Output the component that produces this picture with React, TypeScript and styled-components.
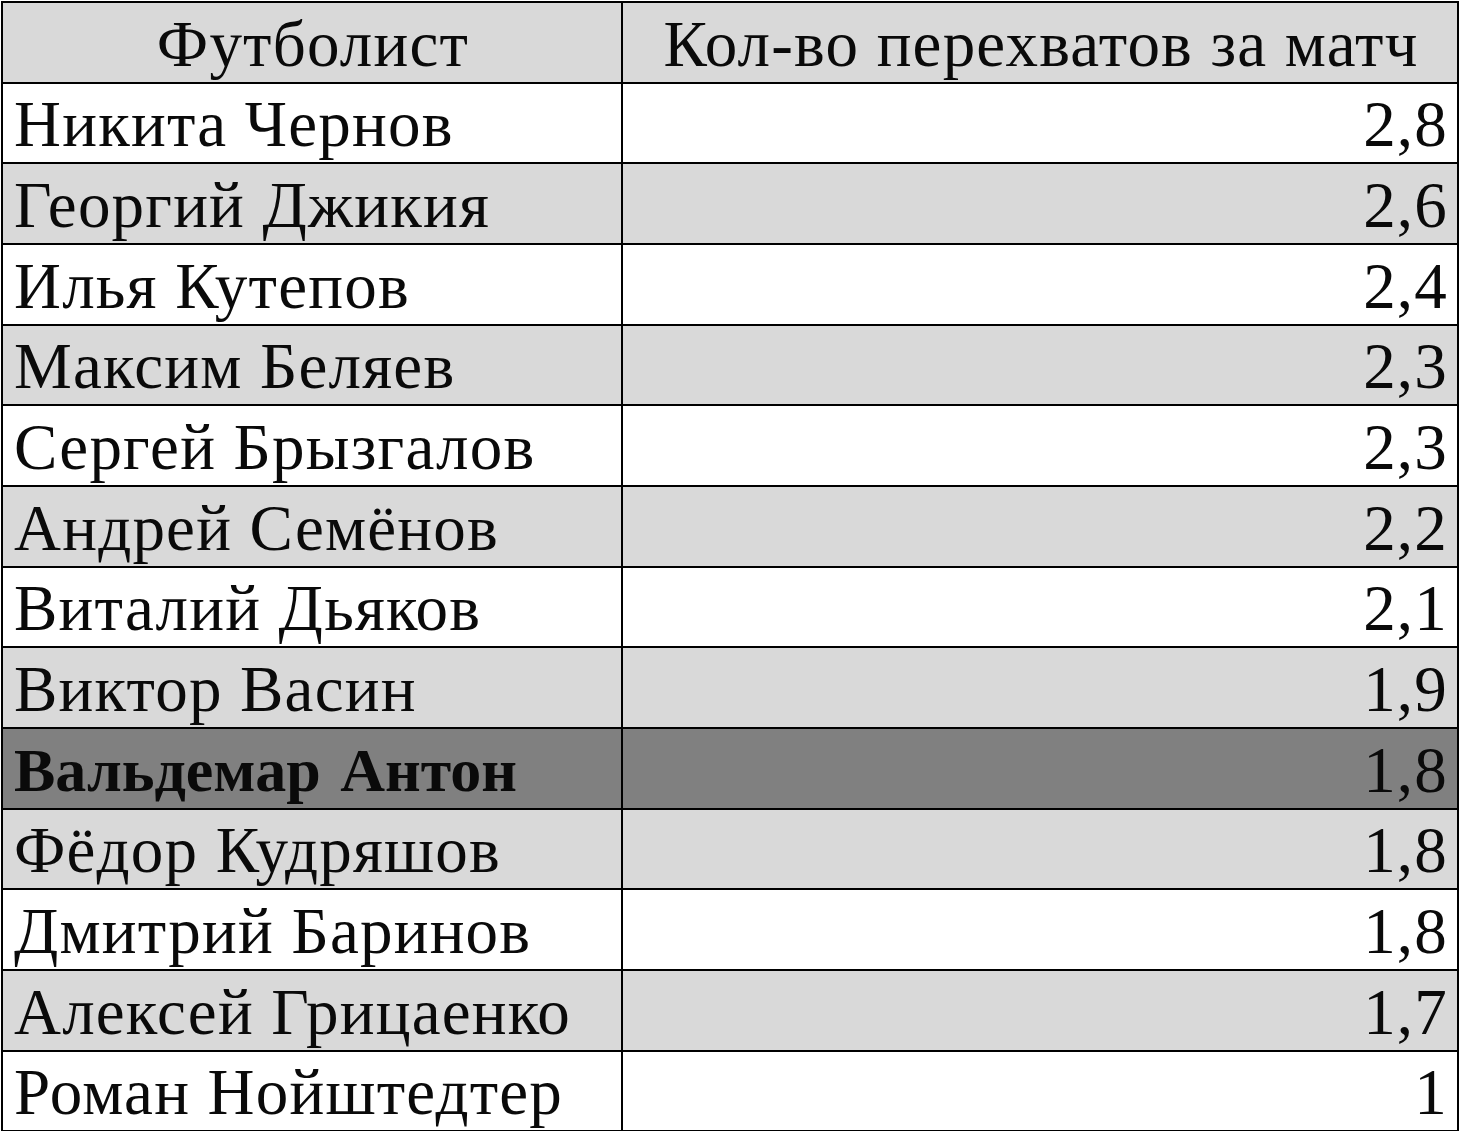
import * as React from 'react';
import styled, { createGlobalStyle } from 'styled-components';

type Row = {
  name: string;
  value: string;
  tone: 'white' | 'gray' | 'dark';
};

const rows: Row[] = [
  { name: 'Никита Чернов', value: '2,8', tone: 'white' },
  { name: 'Георгий Джикия', value: '2,6', tone: 'gray' },
  { name: 'Илья Кутепов', value: '2,4', tone: 'white' },
  { name: 'Максим Беляев', value: '2,3', tone: 'gray' },
  { name: 'Сергей Брызгалов', value: '2,3', tone: 'white' },
  { name: 'Андрей Семёнов', value: '2,2', tone: 'gray' },
  { name: 'Виталий Дьяков', value: '2,1', tone: 'white' },
  { name: 'Виктор Васин', value: '1,9', tone: 'gray' },
  { name: 'Вальдемар Антон', value: '1,8', tone: 'dark' },
  { name: 'Фёдор Кудряшов', value: '1,8', tone: 'gray' },
  { name: 'Дмитрий Баринов', value: '1,8', tone: 'white' },
  { name: 'Алексей Грицаенко', value: '1,7', tone: 'gray' },
  { name: 'Роман Нойштедтер', value: '1', tone: 'white' },
];

const toneColor = {
  white: '#ffffff',
  gray: '#d9d9d9',
  dark: '#808080',
};

const GlobalStyle = createGlobalStyle`
  html, body {
    margin: 0;
    padding: 0;
    background: #ffffff;
    overflow: hidden;
  }
`;

const Page = styled.div`
  padding: 1px;
  width: 1460px;
  height: 1131px;
  box-sizing: border-box;
  overflow: hidden;
`;

const Table = styled.div`
  display: grid;
  grid-template-columns: 618px 834px;
  grid-auto-rows: 78.67px;
  gap: 2px;
  padding: 2px;
  width: 1458px;
  box-sizing: border-box;
  background: #000000;
  font-family: 'Liberation Serif', 'Times New Roman', serif;
  font-size: 65px;
  color: #0a0a0a;
`;

const Cell = styled.div<{ $tone: Row['tone']; $align?: 'left' | 'center' | 'right' }>`
  display: flex;
  align-items: center;
  justify-content: ${(p) =>
    p.$align === 'center' ? 'center' : p.$align === 'right' ? 'flex-end' : 'flex-start'};
  padding: 4px 9px 0 11px;
  background: ${(p) => toneColor[p.$tone]};
  line-height: 1;
  letter-spacing: 1.2px;
  white-space: nowrap;
  overflow: hidden;
`;

const Name = styled.span<{ $bold: boolean }>`
  font-weight: ${(p) => (p.$bold ? 700 : 400)};
  font-size: ${(p) => (p.$bold ? '62px' : 'inherit')};
  letter-spacing: ${(p) => (p.$bold ? '0' : 'inherit')};
  word-spacing: ${(p) => (p.$bold ? '4px' : 'normal')};
`;

export default function App() {
  return (
    <Page>
      <GlobalStyle />
      <Table>
        <Cell $tone="gray" $align="center">
          Футболист
        </Cell>
        <Cell $tone="gray" $align="center">
          Кол-во перехватов за матч
        </Cell>
        {rows.map((row) => (
          <React.Fragment key={row.name}>
            <Cell $tone={row.tone}>
              <Name $bold={row.tone === 'dark'}>{row.name}</Name>
            </Cell>
            <Cell $tone={row.tone} $align="right">
              {row.value}
            </Cell>
          </React.Fragment>
        ))}
      </Table>
    </Page>
  );
}
